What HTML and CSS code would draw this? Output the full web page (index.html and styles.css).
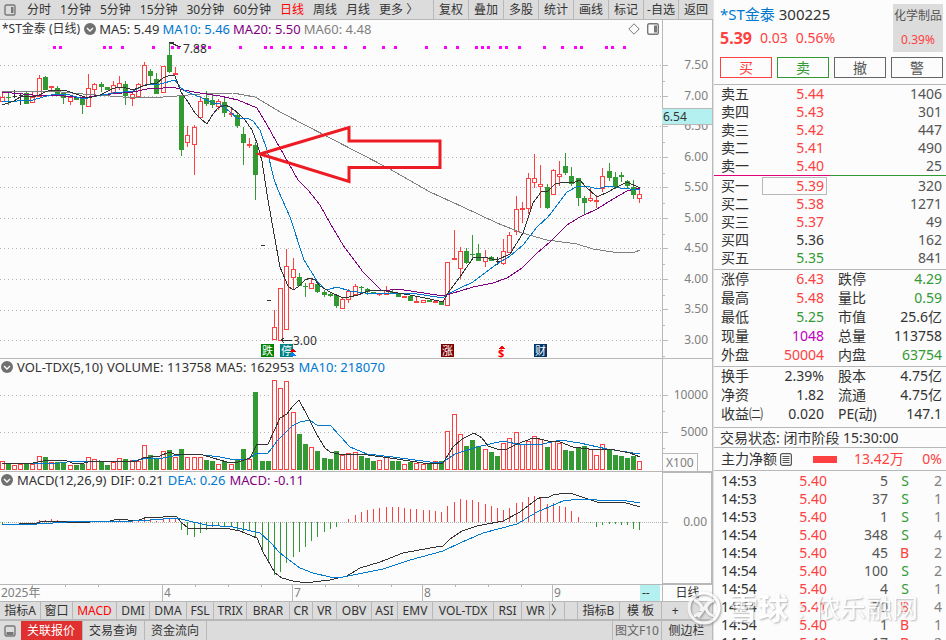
FILE: index.html
```html
<!DOCTYPE html>
<html lang="zh-CN">
<head>
<meta charset="utf-8">
<title>*ST金泰 300225</title>
<link rel="stylesheet" href="styles.css">
</head>
<body>
<div class="app">
  <main class="left">
    <nav class="topbar">
      <button class="icon-btn" aria-label="布局"><svg width="12" height="12" viewBox="0 0 12 12"><rect x="1" y="1" width="10" height="10" rx="1.5" fill="none" stroke="#777" stroke-width="1.4"/><rect x="7" y="3" width="2.5" height="6" fill="#777"/></svg></button>
      <div class="periods">
        <button>分时</button><button>1分钟</button><button>5分钟</button><button>15分钟</button><button>30分钟</button><button>60分钟</button><button class="on">日线</button><button>周线</button><button>月线</button><button>更多 〉</button>
      </div>
      <div class="tools">
        <button>复权</button><button>叠加</button><button>多股</button><button>统计</button><button>画线</button><button>标记</button><button>-自选</button><button>返回</button>
      </div>
    </nav>

    <section class="panel price-panel">
      <div class="legend">
        <span class="name">*ST金泰 (日线)</span>
        <svg class="chev" width="12" height="12" viewBox="0 0 12 12"><circle cx="6" cy="6" r="6" fill="#707070"/><path d="M3 5l3 3 3-3" fill="none" stroke="#fff" stroke-width="1.4"/></svg>
        <span>MA5: 5.49</span><span class="blue">MA10: 5.46</span><span class="purple">MA20: 5.50</span><span class="gray">MA60: 4.48</span>
        <svg class="corner" width="32" height="12" viewBox="0 0 32 12"><path d="M6 .8L11.200 6 6 11.200.8 6z" fill="none" stroke="#777"/><rect x="19.700" y=".7" width="10.600" height="10.600" rx="1.500" fill="none" stroke="#777" stroke-width="1.400"/><rect x="26" y="2.500" width="3" height="7" fill="#777"/></svg>
      </div>
      <svg class="plot" id="price" viewBox="0 20 662 339" preserveAspectRatio="none">
        <g id="price-grid"></g><g id="dots"></g><g id="candles"></g>
        <polyline class="ln c-gray" points="2,91 50,91 83,94 123,97 163,97 177,96 200,94 233,93 255,97 267,104 280,112 330,138 388,168 430,192 463,207 497,223 522,233 547,240 577,244 593,249 613,252 635,252 640,250"/>
        <polyline class="ln c-purple" points="2,92 33,95 55,95 83,98 100,95 133,92 147,89 163,88 173,87 183,90 200,93 220,96 238,100 257,108 267,125 280,148 298,180 308,190 320,205 330,223 343,245 363,272 382,291 398,289 417,292 443,296 460,291 473,287 493,283 507,278 522,268 537,253 550,242 567,225 580,217 597,209 613,199 627,191 640,188"/>
        <polyline class="ln c-blue" points="2,101 17,101 33,100 43,97 55,94 70,95 83,99 97,96 113,93 133,91 145,85 160,84 175,80 181,88 187,92 200,97 213,103 220,104 230,112 237,118 247,118 253,121 260,130 267,150 274,179 278,190 290,217 304,260 317,281 325,289 330,289 337,287 350,291 373,294 397,293 417,294 443,298 448,294 460,288 473,282 497,264 510,256 523,245 537,227 548,217 567,192 578,186 587,186 597,189 608,186 620,188 640,190"/>
        <polyline class="ln c-dark" points="2,105 14,101 20,97 26,96 33,97 39,95 45,92 51,90 64,90 76,94 88,98 100,95 110,90 117,87 123,87 133,90 143,86 150,84 157,83 163,78 170,75 175,76 181,92 188,102 195,113 201,119 207,124 213,114 218,108 225,105 230,107 238,113 245,120 252,130 257,143 262,161 268,200 271,217 280,267 288,286 293,290 298,287 305,280 310,278 315,280 320,286 325,289 330,292 343,298 349,297 358,295 368,291 380,290 392,292 410,295 430,299 443,302 448,293 460,277 473,258 483,257 497,260 510,254 523,233 533,203 541,192 548,191 555,184 560,183 575,182 580,180 585,186 597,197 608,192 617,187 627,182 640,188"/>
        <path class="ln c-dark" d="M169 42H173V44M170 43L181 47M281 340H292M281 340l3-2M281 340l3 3"/>
        <text x="183" y="53">7.88</text>
        <text x="293" y="345">3.00</text>
        <path class="arrow" d="M260 154L349 127.500V141H440V167.500H349V181.500Z"/>
        <g class="flag"><rect x="261" y="344" width="13" height="13" fill="#008000"/><text x="262" y="355">跌</text>
        <rect x="280" y="344" width="13" height="13" fill="#008080"/><text x="281" y="355">停</text>
        <rect x="441" y="344" width="13" height="13" fill="#7b0000"/><text x="442" y="355">涨</text>
        <rect x="534" y="344" width="13" height="13" fill="#003366"/><text x="535" y="355">财</text></g>
        <path d="M290 352l3-4 3 4z" fill="#e00000"/><path d="M290 356l3-4 3 4z" fill="#0080ff"/>
        <path d="M499 348.500l3-2.500 3 2.500z" fill="#f00"/><text class="dollar" x="498" y="357">$</text>
      </svg>
      <ol class="axis price-axis"><li>7.50</li><li>7.00</li><li>6.50</li><li>6.00</li><li>5.50</li><li>5.00</li><li>4.50</li><li>4.00</li><li>3.50</li><li>3.00</li></ol>
      <span class="tag">6.54</span>
    </section>

    <section class="panel">
      <div class="legend">
        <svg class="chev" width="12" height="12" viewBox="0 0 12 12"><circle cx="6" cy="6" r="6" fill="#707070"/><path d="M3 5l3 3 3-3" fill="none" stroke="#fff" stroke-width="1.4"/></svg>
        <span>VOL-TDX(5,10)</span><span>VOLUME: 113758</span><span>MA5: 162953</span><span class="blue">MA10: 218070</span>
      </div>
      <svg class="plot" viewBox="0 359 662 113" preserveAspectRatio="none">
        <path class="grid" d="M0 395.500H662M0 432.500H662"/>
        <g id="volumes"></g>
        <polyline class="ln c-blue" points="2,464 60,463 67,462 100,461 127,462 143,459 163,458 173,456 187,454 203,455 220,457 230,459 248,459 257,453 268,453 278,440 292,426 300,422 310,420 318,426 330,425 350,447 367,454 393,457 430,462 443,462 455,454 477,447 503,441 522,445 543,444 560,440 580,443 607,449 640,454"/>
        <polyline class="ln c-dark" points="2,463 33,463 48,460 65,460 72,463 80,464 88,462 107,461 123,462 137,461 143,458 160,456 169,452 177,455 200,454 213,458 227,462 238,462 250,458 257,444 268,444 280,418 287,414 293,406 299,400 307,415 317,435 325,448 330,452 343,455 360,454 383,457 410,461 430,464 443,463 453,447 462,439 474,433 482,438 488,446 497,449 507,449 517,444 533,438 540,439 548,441 560,442 573,447 597,450 610,449 630,453 640,457"/>
      </svg>
      <ol class="axis vol-axis"><li>10000</li><li>5000</li></ol>
      <span class="unit">X100</span>
    </section>

    <section class="panel">
      <div class="legend">
        <svg class="chev" width="12" height="12" viewBox="0 0 12 12"><circle cx="6" cy="6" r="6" fill="#707070"/><path d="M3 5l3 3 3-3" fill="none" stroke="#fff" stroke-width="1.4"/></svg>
        <span>MACD(12,26,9)</span><span>DIF: 0.21</span><span class="blue">DEA: 0.26</span><span class="purple">MACD: -0.11</span>
      </div>
      <svg class="plot" viewBox="0 472 662 113" preserveAspectRatio="none">
        <path class="grid zero" d="M0 522.500H662"/>
        <g id="macd"></g>
        <polyline class="ln c-dark" points="2,525 37,523 43,521 60,521 67,522 83,523 90,522 110,521 118,519 137,521 147,517 163,517 168,516 176,516 182,523 188,528 197,529 213,528 230,529 240,531 257,538 263,552 275,573 282,578 293,581 300,582 313,582 330,580 347,576 360,568 380,562 403,553 430,548 443,546 450,539 462,531 477,526 503,521 520,512 537,499 542,497 547,498 553,495 565,493 573,494 597,502 607,502 623,502 640,507"/>
        <polyline class="ln c-blue" points="2,524 37,524 53,523 67,522 133,521 150,520 177,518 193,522 207,525 233,527 247,530 260,533 270,542 280,553 300,568 313,573 330,577 343,577 363,573 383,569 410,560 443,551 460,543 483,533 517,524 537,512 563,501 580,499 597,500 627,501 640,503"/>
      </svg>
      <ol class="axis macd-axis"><li>0.00</li></ol>
    </section>

    <div class="dates">
      <div class="months"><span>2025年</span><span>4</span><span>7</span><span>8</span><span>9<b>--</b></span></div>
      <div class="period">日线</div>
    </div>

    <nav class="tabs">
      <button>指标A</button><button>窗口</button><button class="on">MACD</button><button>DMI</button><button>DMA</button><button>FSL</button><button>TRIX</button><button>BRAR</button><button>CR</button><button>VR</button><button>OBV</button><button>ASI</button><button>EMV</button><button>VOL-TDX</button><button>RSI</button><button>WR</button><button aria-label="更多">〉</button><i></i><button>指标B</button><button>模 板</button><div class="pm"><button>+</button><button>-</button></div>
    </nav>

    <footer class="bottom">
      <button class="icon-btn" aria-label="面板"><svg width="12" height="12" viewBox="0 0 12 12"><rect x="1" y="1" width="10" height="10" rx="1.500" fill="none" stroke="#777" stroke-width="1.400"/><rect x="2.500" y="7" width="7" height="3" fill="#777"/></svg></button>
      <button class="hot">关联报价</button><button>交易查询</button><button>资金流向</button>
      <button class="f10">图文F10</button><button class="side-btn">侧边栏</button>
    </footer>
  </main>

  <aside class="side">
    <header class="quote">
      <div class="ident">
        <h1><a href="#">*ST金泰</a> 300225</h1>
        <p><strong>5.39</strong><span>0.03</span><span>0.56%</span></p>
      </div>
      <div class="sector"><span>化学制品</span><em>0.39%</em></div>
      <div class="actions"><button class="buy">买</button><button class="sell">卖</button><button>撤</button><button>警</button></div>
    </header>
    <table class="book asks">
      <tr><th>卖五</th><td class="red">5.44</td><td>1406</td></tr>
      <tr><th>卖四</th><td class="red">5.43</td><td>301</td></tr>
      <tr><th>卖三</th><td class="red">5.42</td><td>447</td></tr>
      <tr><th>卖二</th><td class="red">5.41</td><td>490</td></tr>
      <tr><th>卖一</th><td class="red">5.40</td><td>25</td></tr>
    </table>
    <div class="ratio"></div>
    <table class="book bids">
      <tr><th>买一</th><td class="red boxed">5.39</td><td>320</td></tr>
      <tr><th>买二</th><td class="red">5.38</td><td>1271</td></tr>
      <tr><th>买三</th><td class="red">5.37</td><td>49</td></tr>
      <tr><th>买四</th><td class="dark">5.36</td><td>162</td></tr>
      <tr><th>买五</th><td class="green">5.35</td><td>841</td></tr>
    </table>
    <table class="stats">
      <tr><th>涨停</th><td class="red">6.43</td><th>跌停</th><td class="green">4.29</td></tr>
      <tr><th>最高</th><td class="red">5.48</td><th>量比</th><td class="green">0.59</td></tr>
      <tr><th>最低</th><td class="green">5.25</td><th>市值</th><td>25.6亿</td></tr>
      <tr><th>现量</th><td class="magenta">1048</td><th>总量</th><td>113758</td></tr>
      <tr><th>外盘</th><td class="red">50004</td><th>内盘</th><td class="green">63754</td></tr>
    </table>
    <table class="stats funda">
      <tr><th>换手</th><td>2.39%</td><th>股本</th><td>4.75亿</td></tr>
      <tr><th>净资</th><td>1.82</td><th>流通</th><td>4.75亿</td></tr>
      <tr><th>收益㈡</th><td>0.020</td><th>PE(动)</th><td>147.1</td></tr>
    </table>
    <p class="status">交易状态: 闭市阶段 15:30:00</p>
    <div class="flow"><span>主力净额</span><svg width="12" height="13" viewBox="0 0 12 13"><rect x=".6" y=".6" width="10.800" height="11.800" rx="2" fill="none" stroke="#555" stroke-width="1.200"/><path d="M2.500 3.500h7M2.500 5.500h7M2.500 7.500h7M2.500 9.500h7" stroke="#555"/></svg><i></i><b>13.42万</b><b class="pct">0%</b></div>
    <table class="ticks">
      <tr><th>14:53</th><td>5.40</td><td>5</td><td class="green">S</td><td>2</td></tr>
      <tr><th>14:53</th><td>5.40</td><td>37</td><td class="green">S</td><td>1</td></tr>
      <tr><th>14:53</th><td>5.40</td><td>1</td><td class="green">S</td><td>1</td></tr>
      <tr><th>14:54</th><td>5.40</td><td>348</td><td class="green">S</td><td>4</td></tr>
      <tr><th>14:54</th><td>5.40</td><td>45</td><td class="red">B</td><td>2</td></tr>
      <tr><th>14:54</th><td>5.40</td><td>100</td><td class="green">S</td><td>2</td></tr>
      <tr><th>14:54</th><td>5.40</td><td>4</td><td class="green">S</td><td>1</td></tr>
      <tr><th>14:54</th><td>5.41</td><td>70</td><td class="red">B</td><td>4</td></tr>
      <tr><th>14:54</th><td>5.40</td><td>1</td><td class="red">B</td><td>1</td></tr>
      <tr><th>14:54</th><td>5.40</td><td>17</td><td class="red">B</td><td>2</td></tr>
    </table>
  </aside>

  <div class="watermark">
    <svg width="36" height="36" viewBox="0 0 36 36"><circle cx="18" cy="18" r="15" fill="none" stroke="#fff" stroke-width="3"/><path d="M8 10q7 3 8 8q-1 6-8 8M28 10q-7 3-8 8q1 6 8 8M12 27L25 9" fill="none" stroke="#fff" stroke-width="3"/></svg>
    <b>雪球</b><span class="colon">:</span><span>侬乐融网</span>
  </div>
</div>
<script src="chart.js"></script>
</body>
</html>
```
FILE: chart.js
```js
// Each bar: kind (r hollow up, g solid down, k flat), body top, body bottom, high, low
const bars = `r 97 102 92 102|g 97 98 91 105|k 96 96 90 98|k 95 95 93 105|g 93 104 92 104|r 97 103 91 103|r 78 97 75 97|g 77 90 76 90|r 86 88 86 91|g 88 94 86 96
g 93 98 93 104|r 97 102 97 105|g 97 100 97 100|g 99 105 99 114|r 88 107 74 107|r 84 90 83 96|g 84 87 82 92|g 87 90 87 90|r 85 93 81 93|r 83 88 76 90
g 84 96 81 105|r 94 99 91 106|r 84 97 83 97|r 65 86 62 86|g 71 76 69 83|g 79 94 73 94|r 66 93 66 93|g 55 72 42 73|r 73 75 67 75|g 95 150 95 156
r 135 143 126 147|r 127 145 125 175|r 101 118 96 119|g 98 104 91 106|g 100 105 95 108|r 101 107 99 110|g 102 113 98 117|r 113 115 108 117|g 115 126 112 128|g 134 143 127 165
r 144 146 138 148|g 145 175 142 200|k 245 245 245 245|k 300 300 300 300|r 327 340 310 340|r 288 341 288 341|r 266 330 249 330|r 269 278 258 290|g 277 286 273 286|g 286 287 283 297
r 283 289 278 289|g 284 292 282 293|g 292 295 290 297|g 294 296 293 297|g 295 306 294 308|r 299 309 297 309|r 291 300 289 303|r 286 295 284 296|g 287 288 286 293|g 289 292 288 295
g 292 294 292 294|r 293 295 293 296|r 290 295 286 295|g 292 293 290 294|g 293 297 293 297|r 296 298 296 298|g 296 301 296 301|r 301 303 296 303|r 300 303 300 303|g 300 302 300 302
r 301 303 301 303|g 302 305 302 305|r 262 306 262 306|r 258 259 230 259|r 251 269 247 279|g 251 263 248 264|g 254 255 235 259|g 253 261 244 261|r 257 262 250 267|g 257 261 256 261
k 261 261 257 265|r 251 264 239 265|r 235 253 232 253|r 209 232 196 235|r 208 210 202 223|r 178 209 173 214|r 178 183 154 188|r 184 187 165 208|g 187 208 184 209|r 170 195 169 195
r 174 177 161 186|g 166 173 153 175|g 176 184 167 186|g 178 198 178 206|g 198 203 196 215|r 198 201 188 202|r 200 202 195 208|r 176 189 168 192|g 171 178 163 181|g 177 187 172 189
g 175 177 172 182|g 181 186 180 188|g 187 195 180 199|r 194 199 189 203`.split(/[|\n]/).map(s => s.split(' '));
const volTop = [461,464,465,464,463,464,456,457,462,462,462,465,465,464,457,459,462,465,462,458,459,460,461,445,455,459,451,450,457,449,457,457,457,460,461,464,461,464,459,449,459,392,461,461,380,388,381,412,434,444,447,451,458,459,451,455,453,452,456,458,461,460,457,461,461,464,462,463,464,464,461,461,431,414,434,446,440,446,449,452,456,443,438,432,444,441,436,439,447,441,443,450,451,447,446,449,455,444,449,455,456,458,456,461];
const macdEnd = [524,523,522,522,522,522,520,520,519,520,522,522,522,523,522,521,521,521,520,520,521,521,521,519,519,521,519,519,518,530,535,537,533,530,527,526,526,526,530,531,531,537,550,563,575,572,563,557,552,547,541,537,532,529,527,522,519,515,512,510,509,508,507,507,507,508,509,509,510,510,511,512,506,502,499,500,500,502,504,506,508,510,508,503,502,497,496,498,504,503,506,507,511,517,522,523,527,525,524,524,525,525,529,530];
const dots = [54,60,104,110,122,153,172,178,197,203,209,240,265,271,283,290,302,315,321,333,345,364,383,395,426,445,457,476,482,488,500,506,519,544,562,575,581,606,612,624];
const RED = '#ff4040', GREEN = '#339933', DARK = '#333';
const xOf = i => Math.floor(2 + i * 6.194) + 0.5;
const put = (id, markup) => { document.getElementById(id).innerHTML = markup; };
const vline = (x, a, b, c) => `<path d="M${x} ${a}V${b}" stroke="${c}"/>`;
const box = (x, t, b, hollow) => hollow
  ? `<rect x="${x - 2}" y="${t + 0.5}" width="4" height="${Math.max(b - t - 1, 1)}" fill="#fcfcfc" stroke="${RED}"/>`
  : `<rect x="${x - 2.5}" y="${t}" width="5" height="${Math.max(b - t, 1)}" fill="${GREEN}"/>`;

put('price-grid', [65,96,126,157,187,218,248,279,310,340].map(y => `<path class="grid" d="M0 ${y + 0.5}H662"/>`).join(''));
put('dots', dots.map(x => `<rect x="${x - 1}" y="46" width="3" height="3" fill="#f0f"/>`).join(''));
put('candles', bars.map(([kind, ...v], i) => {
  const [t, b, h, l] = v.map(Number), x = xOf(i);
  if (kind === 'k') return vline(x, h, l, DARK) + `<path d="M${x - 2} ${t + 0.5}h4" stroke="${DARK}"/>`;
  return vline(x, h, l, kind === 'r' ? RED : GREEN) + box(x, t, b, kind === 'r');
}).join(''));
const up = new Set([2, 3]);
put('volumes', bars.map(([kind], i) => box(xOf(i), volTop[i], 470, kind === 'r' || up.has(i))).join(''));
put('macd', macdEnd.map((y, i) => y === 522 ? '' : vline(xOf(i), 522, y, y < 522 ? RED : GREEN)).join(''));
```
FILE: styles.css
```css
* { box-sizing: border-box; margin: 0; padding: 0; }
body { background: #fcfcfc; color: #333; font: 12px/16px "Noto Sans", "Noto Sans CJK SC", sans-serif; }
button { border: 0; background: none; color: inherit; font: inherit; white-space: nowrap; }
.app { position: relative; display: grid; grid-template: minmax(0, 1fr) / minmax(0, 1fr) 233px; height: 100vh; overflow: hidden; }
.left { display: grid; grid-template-rows: 20px minmax(0, 3fr) minmax(0, 1fr) minmax(0, 1fr) 16px 20px 19px; min-width: 0; min-height: 0; }
.red { color: #ff4040; }
.green { color: #339933; }
.blue { color: #0078d0; }
.purple { color: #800080; }
.gray { color: #808080; }
.magenta { color: #c000c0; }
.dark { color: #333; }

.topbar { display: flex; background: #dcdcdc; border-bottom: 1px solid #b8b8b8; }
.icon-btn { display: flex; align-items: center; padding: 0 4px; }
.periods { display: flex; gap: 9px; padding-left: 7px; }
.topbar .on, .tabs .on { color: #f00; }
.tools { display: flex; margin-left: auto; }
.tools button { width: 35px; border-left: 1px solid #b8b8b8; }

.panel { position: relative; display: grid; grid-template: minmax(0, 1fr) / minmax(0, 1fr) 51px; border-bottom: 1px solid #b8b8b8; min-height: 0; }
.legend { grid-area: 1 / 1; align-self: start; display: flex; align-items: center; gap: 4px; padding: 0 2px 0 1px; z-index: 1; font-size: 13px; white-space: nowrap; }
.legend .name { padding: 0 1px; font-size: 12px; }
.price-panel .legend { gap: 3px; padding-top: 1px; }
.legend .corner { margin-left: auto; }
.plot { grid-area: 1 / 1; display: block; width: 100%; height: calc(100% + 1px); shape-rendering: crispEdges; }
.plot text { font-size: 12px; fill: #333; }
.plot .flag text { font-size: 11px; fill: #fff; }
.plot .dollar { font-size: 11px; font-weight: bold; fill: #f00; }
.grid { stroke: #b4b4b4; stroke-dasharray: 1 3; fill: none; }
.zero { stroke-dasharray: 1 1; }
.ln { fill: none; stroke-width: 1; }
.c-dark { stroke: #333; }
.c-blue { stroke: #0078d0; }
.c-purple { stroke: #800080; }
.c-gray { stroke: #808080; }
.arrow { fill: none; stroke: #ed1c24; stroke-width: 3; shape-rendering: auto; }

.axis { list-style: none; display: flex; flex-direction: column; border: solid #b8b8b8; border-width: 0 1px; color: #808080; text-align: right; }
.axis li { position: relative; padding-right: 4px; }
.axis li::before { content: ""; position: absolute; left: 0; top: 8px; width: 5px; height: 1px; background: #b8b8b8; }
.axis li::after { content: ""; position: absolute; left: 0; top: 24px; width: 2px; height: 1px; background: #b8b8b8; }
.price-axis { justify-content: space-between; padding: 37px 0 10px; }
.vol-axis { justify-content: space-between; padding: 28px 0 31px; }
.macd-axis { justify-content: center; border-width: 1px 2px 1px 1px; padding-bottom: 12px; }
.macd-axis li::after { display: none; }
.tag { position: absolute; right: 1px; top: 88px; width: 50px; height: 17px; padding-left: 1px; line-height: 15px; background: #b4f0f0; border: solid #b8b8b8; border-width: 1px 0; }
.unit { position: absolute; left: calc(100% - 51px); bottom: 0; padding: 0 3px; line-height: 17px; border: 1px solid #b8b8b8; border-bottom: 0; color: #808080; background: #fcfcfc; }

.dates { display: grid; grid-template-columns: minmax(0, 1fr) 51px; color: #808080; line-height: 15px; }
.months { display: grid; grid-template-columns: 162fr 130fr 130fr 130fr 110fr; }
.months span { display: flex; border-left: 1px solid #b8b8b8; padding-left: 1px; background: repeating-linear-gradient(90deg, transparent 0 32px, #b8b8b8 32px 33px) 0 0 / 129px 2px no-repeat; }
.months span:first-child { border: 0; }
.months span:last-child { background: none; }
.months b { margin-left: auto; margin-right: 2px; width: 20px; padding-left: 2px; background: #b4f0f0; color: #333; font-weight: normal; }
.period { border: solid #b8b8b8; border-width: 0 1px; color: #333; text-align: center; }

.tabs { display: grid; grid-template-columns: 41fr 32fr 44fr 33fr 37fr 27fr 33fr 43fr 23fr 24fr 35fr 26fr 35fr 61fr 28fr 28fr 15fr 13fr 42fr 42fr 51fr; background: #dcdcdc; border-bottom: 2px solid #b8b8b8; border-top: 1px solid #b8b8b8; }
.tabs > * { min-width: 0; overflow: hidden; border-right: 1px solid #b8b8b8; text-align: center; }
.pm { display: flex; justify-content: space-around; }

.bottom { display: flex; background: #dcdcdc; }
.bottom button { border-right: 1px solid #b8b8b8; padding: 0 7px 0 6px; }
.bottom .icon-btn { padding: 0 5px 0 4px; border: 0; }
.bottom .hot { background: #e03030; color: #fff; }
.bottom .f10 { margin-left: auto; width: 50px; padding: 0; border-left: 1px solid #b8b8b8; color: #666; }
.bottom .side-btn { width: 51px; }

.side { overflow: hidden; min-height: 0; font-size: 14px; line-height: 18px; border-left: 1px solid #e4e4e4; }
.quote { display: grid; grid-template: 57px 21px / 1fr 50px; padding: 0 3px 6px 6px; border-bottom: 1px solid #b8b8b8; }
.quote h1 { font-size: 15px; font-weight: normal; line-height: 18px; padding-top: 5px; }
.quote a { color: #0078d0; text-decoration: none; }
.quote p { display: flex; align-items: center; gap: 8px; color: #ff4040; line-height: 30px; }
.quote strong { font-size: 16px; }
.sector { display: flex; flex-direction: column; margin-top: 4px; height: 48px; background: #dcdcdc; text-align: center; font-size: 12px; line-height: 24px; }
.sector span { color: #555; white-space: nowrap; }
.sector em { color: #ff4040; font-style: normal; }
.actions { grid-column: 1 / 3; display: grid; grid-template-columns: repeat(4, 1fr); gap: 5px; }
.actions button { border: 1px solid #666; color: #555; }
.actions .buy { border-color: #ff4040; color: #ff4040; }
.actions .sell { border-color: #339933; color: #339933; }

table { width: 100%; border-collapse: collapse; table-layout: fixed; }
th { font-weight: normal; text-align: left; white-space: nowrap; }
td { text-align: right; white-space: nowrap; }
.book tr { height: 18px; }
.book th { width: 48px; padding-left: 7px; }
.book td { color: #555; padding-right: 4px; }
.book td:nth-child(2) { width: 65px; padding-right: 3px; }
.book .red { color: #ff4040; }
.book .green { color: #339933; }
.book .dark { color: #333; }
.book .boxed { box-shadow: inset 0 0 0 1px #b8b8b8; }
.ratio { height: 1px; background: linear-gradient(90deg, #e0007a 50%, #339933 50%); }
.bids { margin-top: 1px; }
.stats { border-top: 1px solid #b8b8b8; }
.bids + .stats { margin-top: 2px; }
.stats tr { height: 19px; }
.stats th:first-child { width: 52px; padding-left: 7px; }
.stats td:nth-child(2) { width: 58px; }
.stats th:nth-child(3) { width: 62px; padding-left: 14px; }
.stats td:nth-child(4) { padding-right: 4px; }
.funda { margin-top: 1px; }
.status { margin-top: 4px; padding-left: 6px; line-height: 19px; border-top: 1px solid #b8b8b8; }
.flow { display: flex; align-items: center; height: 24px; padding: 0 4px 0 7px; border: solid #b8b8b8; border-width: 1px 0; }
.flow svg { margin-left: 3px; }
.flow i { width: 24px; height: 7px; margin-left: 21px; background: #ff4040; }
.flow b { margin-left: 17px; font-weight: normal; color: #ff4040; }
.flow .pct { margin-left: auto; }
.ticks { margin-top: 1px; }
.ticks tr { height: 18px; }
.ticks th { width: 60px; padding-left: 7px; }
.ticks td:nth-child(2) { width: 53px; color: #ff4040; }
.ticks td:nth-child(3) { width: 61px; color: #555; }
.ticks td:nth-child(4) { width: 21px; }
.ticks td:nth-child(5) { padding-right: 4px; color: #808080; }

.watermark { position: absolute; right: 28px; bottom: 12px; display: flex; align-items: center; font-size: 26px; line-height: 40px; color: #fff; opacity: .7; text-shadow: 1px 1px 2px #999; pointer-events: none; }
.watermark svg { margin-right: 6px; filter: drop-shadow(1px 1px 1px #777); }
.watermark b { font-size: 30px; }
.watermark .colon { width: 26px; text-align: center; }
```
